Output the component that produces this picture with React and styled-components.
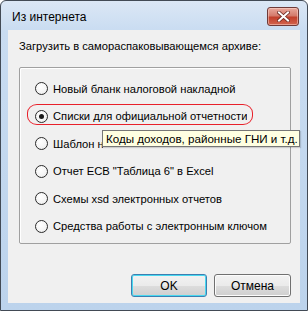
import React from 'react';
import styled, { createGlobalStyle } from 'styled-components';

const Global = createGlobalStyle`
  html, body {
    margin: 0;
    padding: 0;
    background: #ffffff;
  }
  body {
    font-family: "Liberation Sans", Arial, sans-serif;
    font-size: 11px;
    color: #000;
  }
`;

const Window = styled.div`
  box-sizing: border-box;
  width: 308px;
  height: 311px;
  display: flex;
  flex-direction: column;
  border: 1px solid #424a55;
  border-radius: 6px 6px 0 0;
  background: linear-gradient(to bottom, #dbe7f5 0px, #c9dcf1 30px, #bcd3ec 100%);
`;

const TitleBar = styled.div`
  height: 29px;
  display: flex;
  align-items: center;
  padding: 0 8px 0 11px;
  flex-shrink: 0;
`;

const Title = styled.span`
  flex: 1;
  font-size: 12px;
  color: #000;
  padding-top: 2px;
`;

const CloseButton = styled.div`
  width: 30px;
  height: 17px;
  margin-top: 2px;
  display: flex;
  align-items: center;
  justify-content: center;
  border: 1px solid #6e3a38;
  border-radius: 3px;
  background: linear-gradient(to bottom, #e8a89c 0%, #d47b6c 45%, #c2402c 55%, #d2644e 100%);
  box-shadow: inset 0 0 0 1px rgba(255, 220, 210, 0.5);
`;

const Client = styled.div`
  flex: 1;
  margin: 0 7px 7px 7px;
  background: #f0f0f0;
  display: flex;
  flex-direction: column;
  padding: 9px 9px 6px 11px;
  position: relative;
`;

const Prompt = styled.div`
  height: 15px;
  line-height: 15px;
  font-size: 11.2px;
`;

const GroupBox = styled.div`
  margin-top: 13px;
  height: 177px;
  box-sizing: border-box;
  border: 1px solid #a0a0a0;
  border-radius: 2px;
  box-shadow: inset 1px 1px 0 #ffffff;
  display: grid;
  grid-auto-rows: 27.5px;
  padding: 7px 0 0 15px;
`;

const Option = styled.div`
  display: flex;
  align-items: center;
  gap: 5px;
  position: relative;
`;

const Radio = styled.span`
  width: 11px;
  height: 11px;
  border-radius: 50%;
  border: 1px solid #2b2b2b;
  background: radial-gradient(circle at 40% 35%, #ffffff 0%, #f4f4f4 60%, #dcdcdc 100%);
  display: flex;
  align-items: center;
  justify-content: center;
  flex-shrink: 0;
  &::after {
    content: '';
    display: ${p => (p.$checked ? 'block' : 'none')};
    width: 5px;
    height: 5px;
    border-radius: 50%;
    background: #1a1a1a;
  }
`;

const Label = styled.span`
  white-space: nowrap;
  color: #000;
  font-size: 11.2px;
  max-width: ${p => (p.$clip ? `${p.$clip}px` : 'none')};
  overflow: hidden;
`;

const Highlight = styled.div`
  position: absolute;
  left: -8px;
  top: 1px;
  width: 224px;
  height: 19px;
  border: 1px solid #e8202a;
  border-radius: 10px / 9px;
  pointer-events: none;
`;

const Tooltip = styled.div`
  position: absolute;
  left: 94px;
  top: 100px;
  box-sizing: border-box;
  width: 198px;
  height: 17px;
  padding: 0 3px;
  line-height: 15px;
  font-size: 11.6px;
  background: #ffffe1;
  border: 1px solid #767676;
  white-space: nowrap;
  color: #000;
  box-shadow: 1px 1px 1px rgba(0, 0, 0, 0.15);
  z-index: 2;
`;

const Buttons = styled.div`
  margin-top: auto;
  display: flex;
  justify-content: flex-end;
  gap: 7px;
`;

const Button = styled.div`
  box-sizing: border-box;
  width: ${p => p.$w}px;
  height: 23px;
  display: flex;
  align-items: center;
  justify-content: center;
  border-radius: 3px;
  border: 1px solid ${p => (p.$focused ? '#3c7fb1' : '#707070')};
  background: linear-gradient(to bottom, #f2f2f2 0%, #ebebeb 50%, #dddddd 51%, #cfcfcf 100%);
  box-shadow: ${p => (p.$focused ? 'inset 0 0 0 1px #48d8f0' : 'inset 0 0 0 1px #fcfcfc')};
  font-size: 12px;
  color: #000;
`;

const options = [
  { text: 'Новый бланк налоговой накладной' },
  { text: 'Списки для официальной отчетности', checked: true },
  { text: 'Шаблон налоговой накладной', clip: 50 },
  { text: 'Отчет ЕСВ "Таблица 6" в Excel' },
  { text: 'Схемы xsd электронных отчетов' },
  { text: 'Средства работы с электронным ключом' },
];

const App = () => (
  <>
    <Global />
    <Window>
      <TitleBar>
        <Title>Из интернета</Title>
        <CloseButton>
          <svg width="13" height="11" viewBox="0 0 13 11">
            <path
              d="M2 1.5 L11 9.5 M11 1.5 L2 9.5"
              stroke="#6b2a22"
              strokeWidth="3.6"
              strokeLinecap="square"
            />
            <path
              d="M2 1.5 L11 9.5 M11 1.5 L2 9.5"
              stroke="#ffffff"
              strokeWidth="2"
              strokeLinecap="square"
            />
          </svg>
        </CloseButton>
      </TitleBar>
      <Client>
        <Prompt>Загрузить в самораспаковывающемся архиве:</Prompt>
        <GroupBox>
          {options.map(opt => (
            <Option key={opt.text}>
              <Radio $checked={opt.checked} />
              <Label $clip={opt.clip}>{opt.text}</Label>
              {opt.checked && <Highlight />}
            </Option>
          ))}
        </GroupBox>
        <Tooltip>Коды доходов, районные ГНИ и т.д.</Tooltip>
        <Buttons>
          <Button $w={76} $focused>OK</Button>
          <Button $w={77}>Отмена</Button>
        </Buttons>
      </Client>
    </Window>
  </>
);

export default App;
